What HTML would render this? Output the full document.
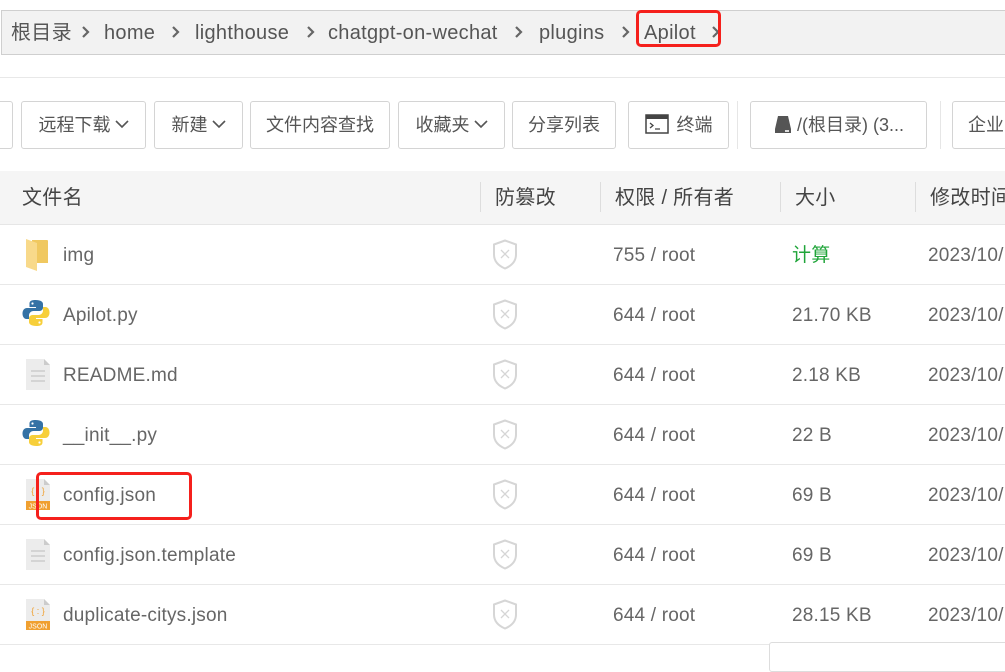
<!DOCTYPE html>
<html><head><meta charset="utf-8"><style>
*{margin:0;padding:0;box-sizing:border-box}
body{width:1005px;height:660px;overflow:hidden;background:#fff;font-family:"Liberation Sans","Noto Sans CJK SC",sans-serif;color:#555;position:relative}
.a{position:absolute;white-space:nowrap}
.bc{left:1px;top:10px;width:1010px;height:45px;background:#f2f2f2;border:1px solid #cfcfcf;border-right:none}
.t{font-size:20px;line-height:24px;letter-spacing:0.3px}
.chev{top:20px}
.btn{top:101px;height:48px;border:1px solid #d4d4d4;border-radius:3px;background:#fff;font-size:18px;line-height:46px;color:#555;text-align:center}
.sep{top:101px;width:1px;height:48px;background:#e6e6e6}
.hd{left:0;top:171px;width:1005px;height:54px;background:#f5f5f5;border-bottom:1px solid #e6e6e6}
.hs{top:182px;width:1px;height:30px;background:#ddd}
.row{left:0;width:1005px;height:1px;background:#e8e8e8}
.ct{font-size:19px;line-height:24px;color:#666;letter-spacing:0.2px}
.red{border:3px solid #f5201c;border-radius:5px}
.dd{display:inline-block;vertical-align:2px;margin-left:4px}
</style></head><body>
<div class="a bc"></div>
<svg width="0" height="0" style="position:absolute"><defs>
<g id="cv"><path d="M2 2l5 5-5 5" fill="none" stroke="#666" stroke-width="2.2"/></g>
<g id="dv"><path d="M1 1l6 6 6-6" fill="none" stroke="#555" stroke-width="1.6"/></g>
<g id="sh"><path d="M13 1.5L24 5.5v10c0 7-5 11.5-11 14C7 27 2 22.5 2 15.5v-10z" fill="none" stroke="#d6d6d6" stroke-width="2"/><path d="M9 11l8 8M17 11l-8 8" stroke="#d6d6d6" stroke-width="1.3"/></g>
</defs></svg>
<div class="a t" style="left:11px;top:21px;color:#555">根目录</div>
<svg class="a chev" style="left:81px;top:25px" width="10" height="14"><use href="#cv"/></svg>
<div class="a t" style="left:104px;top:21px">home</div>
<svg class="a chev" style="left:171px;top:25px" width="10" height="14"><use href="#cv"/></svg>
<div class="a t" style="left:195px;top:21px">lighthouse</div>
<svg class="a chev" style="left:306px;top:25px" width="10" height="14"><use href="#cv"/></svg>
<div class="a t" style="left:328px;top:21px">chatgpt-on-wechat</div>
<svg class="a chev" style="left:514px;top:25px" width="10" height="14"><use href="#cv"/></svg>
<div class="a t" style="left:539px;top:21px">plugins</div>
<svg class="a chev" style="left:621px;top:25px" width="10" height="14"><use href="#cv"/></svg>
<div class="a t" style="left:644px;top:21px">Apilot</div>
<svg class="a chev" style="left:711px;top:25px" width="10" height="14"><use href="#cv"/></svg>
<div class="a red" style="left:636px;top:10px;width:85px;height:37px"></div>
<div class="a" style="left:0;top:77px;width:1005px;height:1px;background:#e8e8e8"></div>

<div class="a btn" style="left:-10px;width:23px"></div>
<div class="a btn" style="left:21px;width:125px">远程下载<svg class="dd" width="14" height="9"><use href="#dv"/></svg></div>
<div class="a btn" style="left:154px;width:89px">新建<svg class="dd" width="14" height="9"><use href="#dv"/></svg></div>
<div class="a btn" style="left:250px;width:140px">文件内容查找</div>
<div class="a btn" style="left:398px;width:107px">收藏夹<svg class="dd" width="14" height="9"><use href="#dv"/></svg></div>
<div class="a btn" style="left:512px;width:104px">分享列表</div>
<div class="a btn" style="left:628px;width:101px"><svg width="24" height="20" viewBox="0 0 24 20" style="vertical-align:-3px;margin-right:8px"><rect x="1" y="1" width="22" height="18" fill="#fff" stroke="#444" stroke-width="1.5"/><rect x="1" y="1" width="22" height="4" fill="#444"/><path d="M5 9l3 2.5-3 2.5M10 15h5" stroke="#444" stroke-width="1.3" fill="none"/></svg>终端</div>
<div class="a sep" style="left:737px"></div>
<div class="a btn" style="left:750px;width:177px"><svg width="20" height="20" viewBox="0 0 20 20" style="vertical-align:-3px;margin-right:4px"><path d="M5 2h10l3 13H2z" fill="#555"/><rect x="2" y="15" width="16" height="4" fill="#555"/><rect x="12" y="16" width="4" height="2" fill="#ddd"/></svg>/(根目录) (3...</div>
<div class="a sep" style="left:940px"></div>
<div class="a btn" style="left:952px;width:80px;text-align:left;padding-left:15px">企业</div>

<div class="a hd"></div>
<div class="a t" style="left:22px;top:186px;color:#444">文件名</div>
<div class="a hs" style="left:480px"></div>
<div class="a t" style="left:495px;top:186px;color:#444">防篡改</div>
<div class="a hs" style="left:600px"></div>
<div class="a t" style="left:615px;top:186px;color:#444">权限 / 所有者</div>
<div class="a hs" style="left:780px"></div>
<div class="a t" style="left:795px;top:186px;color:#444">大小</div>
<div class="a hs" style="left:915px"></div>
<div class="a t" style="left:930px;top:186px;color:#444">修改时间</div>

<div class="a row" style="top:284px"></div>
<div class="a row" style="top:344px"></div>
<div class="a row" style="top:404px"></div>
<div class="a row" style="top:464px"></div>
<div class="a row" style="top:524px"></div>
<div class="a row" style="top:584px"></div>
<div class="a row" style="top:644px"></div>

<svg class="a" style="left:24px;top:237px" width="26" height="36" viewBox="0 0 26 36"><path d="M8 3h15a1 1 0 0 1 1 1v22H8z" fill="#f0c860"/><path d="M2 2l11 4v28L2 30z" fill="#f8d98a"/></svg>
<svg class="a" style="left:22px;top:299px" width="28" height="28" viewBox="0 0 28 28"><path d="M13.5 1c-6 0-6 2.5-6 4v3h6.5v1H5c-3 0-4.5 2.5-4.5 5.5S2 20 4.5 20H7v-3.5c0-2.5 2-4.5 4.5-4.5h6c2 0 3.5-1.5 3.5-3.5V5c0-2-2-4-7.5-4z" fill="#3572a5"/><circle cx="10.5" cy="4.5" r="1.1" fill="#fff"/><path d="M14.5 27c6 0 6-2.5 6-4v-3H14v-1h9c3 0 4.5-2.5 4.5-5.5S26 8 23.5 8H21v3.5c0 2.5-2 4.5-4.5 4.5h-6c-2 0-3.5 1.5-3.5 3.5V23c0 2 2 4 7.5 4z" fill="#f7cf3a"/><circle cx="17.5" cy="23.5" r="1.1" fill="#fff"/></svg>
<svg class="a" style="left:26px;top:359px" width="24" height="31" viewBox="0 0 24 31"><path d="M0 0h18l6 6v25H0z" fill="#ececec"/><path d="M18 0v6h6z" fill="#ccc"/><path d="M5 12h14M5 17h14M5 22h14" stroke="#ccc" stroke-width="1.5"/></svg>
<svg class="a" style="left:22px;top:419px" width="28" height="28" viewBox="0 0 28 28"><path d="M13.5 1c-6 0-6 2.5-6 4v3h6.5v1H5c-3 0-4.5 2.5-4.5 5.5S2 20 4.5 20H7v-3.5c0-2.5 2-4.5 4.5-4.5h6c2 0 3.5-1.5 3.5-3.5V5c0-2-2-4-7.5-4z" fill="#3572a5"/><circle cx="10.5" cy="4.5" r="1.1" fill="#fff"/><path d="M14.5 27c6 0 6-2.5 6-4v-3H14v-1h9c3 0 4.5-2.5 4.5-5.5S26 8 23.5 8H21v3.5c0 2.5-2 4.5-4.5 4.5h-6c-2 0-3.5 1.5-3.5 3.5V23c0 2 2 4 7.5 4z" fill="#f7cf3a"/><circle cx="17.5" cy="23.5" r="1.1" fill="#fff"/></svg>
<svg class="a" style="left:26px;top:479px" width="24" height="31" viewBox="0 0 24 31"><path d="M0 0h18l6 6v25H0z" fill="#ececec"/><path d="M18 0v6h6z" fill="#ccc"/><text x="12" y="15" font-size="9" fill="#f0a030" text-anchor="middle" font-family="Liberation Sans">{ : }</text><rect x="0" y="22" width="24" height="9" fill="#f0a030"/><text x="12" y="29.5" font-size="7" fill="#fff" text-anchor="middle" font-family="Liberation Sans">JSON</text></svg>
<svg class="a" style="left:26px;top:539px" width="24" height="31" viewBox="0 0 24 31"><path d="M0 0h18l6 6v25H0z" fill="#ececec"/><path d="M18 0v6h6z" fill="#ccc"/><path d="M5 12h14M5 17h14M5 22h14" stroke="#ccc" stroke-width="1.5"/></svg>
<svg class="a" style="left:26px;top:599px" width="24" height="31" viewBox="0 0 24 31"><path d="M0 0h18l6 6v25H0z" fill="#ececec"/><path d="M18 0v6h6z" fill="#ccc"/><text x="12" y="15" font-size="9" fill="#f0a030" text-anchor="middle" font-family="Liberation Sans">{ : }</text><rect x="0" y="22" width="24" height="9" fill="#f0a030"/><text x="12" y="29.5" font-size="7" fill="#fff" text-anchor="middle" font-family="Liberation Sans">JSON</text></svg>

<div class="a ct" style="left:63px;top:244px">img</div>
<div class="a ct" style="left:63px;top:304px">Apilot.py</div>
<div class="a ct" style="left:63px;top:364px">README.md</div>
<div class="a ct" style="left:63px;top:424px">__init__.py</div>
<div class="a ct" style="left:63px;top:484px">config.json</div>
<div class="a ct" style="left:63px;top:544px">config.json.template</div>
<div class="a ct" style="left:63px;top:604px">duplicate-citys.json</div>
<div class="a red" style="left:36px;top:472px;width:156px;height:48px"></div>

<svg class="a" style="left:492px;top:239px" width="26" height="31"><use href="#sh"/></svg>
<svg class="a" style="left:492px;top:299px" width="26" height="31"><use href="#sh"/></svg>
<svg class="a" style="left:492px;top:359px" width="26" height="31"><use href="#sh"/></svg>
<svg class="a" style="left:492px;top:419px" width="26" height="31"><use href="#sh"/></svg>
<svg class="a" style="left:492px;top:479px" width="26" height="31"><use href="#sh"/></svg>
<svg class="a" style="left:492px;top:539px" width="26" height="31"><use href="#sh"/></svg>
<svg class="a" style="left:492px;top:599px" width="26" height="31"><use href="#sh"/></svg>

<div class="a ct" style="left:613px;top:244px">755 / root</div>
<div class="a ct" style="left:613px;top:304px">644 / root</div>
<div class="a ct" style="left:613px;top:364px">644 / root</div>
<div class="a ct" style="left:613px;top:424px">644 / root</div>
<div class="a ct" style="left:613px;top:484px">644 / root</div>
<div class="a ct" style="left:613px;top:544px">644 / root</div>
<div class="a ct" style="left:613px;top:604px">644 / root</div>

<div class="a ct" style="left:792px;top:244px;color:#20a53a">计算</div>
<div class="a ct" style="left:792px;top:304px">21.70 KB</div>
<div class="a ct" style="left:792px;top:364px">2.18 KB</div>
<div class="a ct" style="left:792px;top:424px">22 B</div>
<div class="a ct" style="left:792px;top:484px">69 B</div>
<div class="a ct" style="left:792px;top:544px">69 B</div>
<div class="a ct" style="left:792px;top:604px">28.15 KB</div>

<div class="a ct" style="left:928px;top:244px">2023/10/</div>
<div class="a ct" style="left:928px;top:304px">2023/10/</div>
<div class="a ct" style="left:928px;top:364px">2023/10/</div>
<div class="a ct" style="left:928px;top:424px">2023/10/</div>
<div class="a ct" style="left:928px;top:484px">2023/10/</div>
<div class="a ct" style="left:928px;top:544px">2023/10/</div>
<div class="a ct" style="left:928px;top:604px">2023/10/</div>

<div class="a" style="left:769px;top:642px;width:260px;height:30px;background:#fff;border:1px solid #ddd;border-radius:3px"></div>
</body></html>
